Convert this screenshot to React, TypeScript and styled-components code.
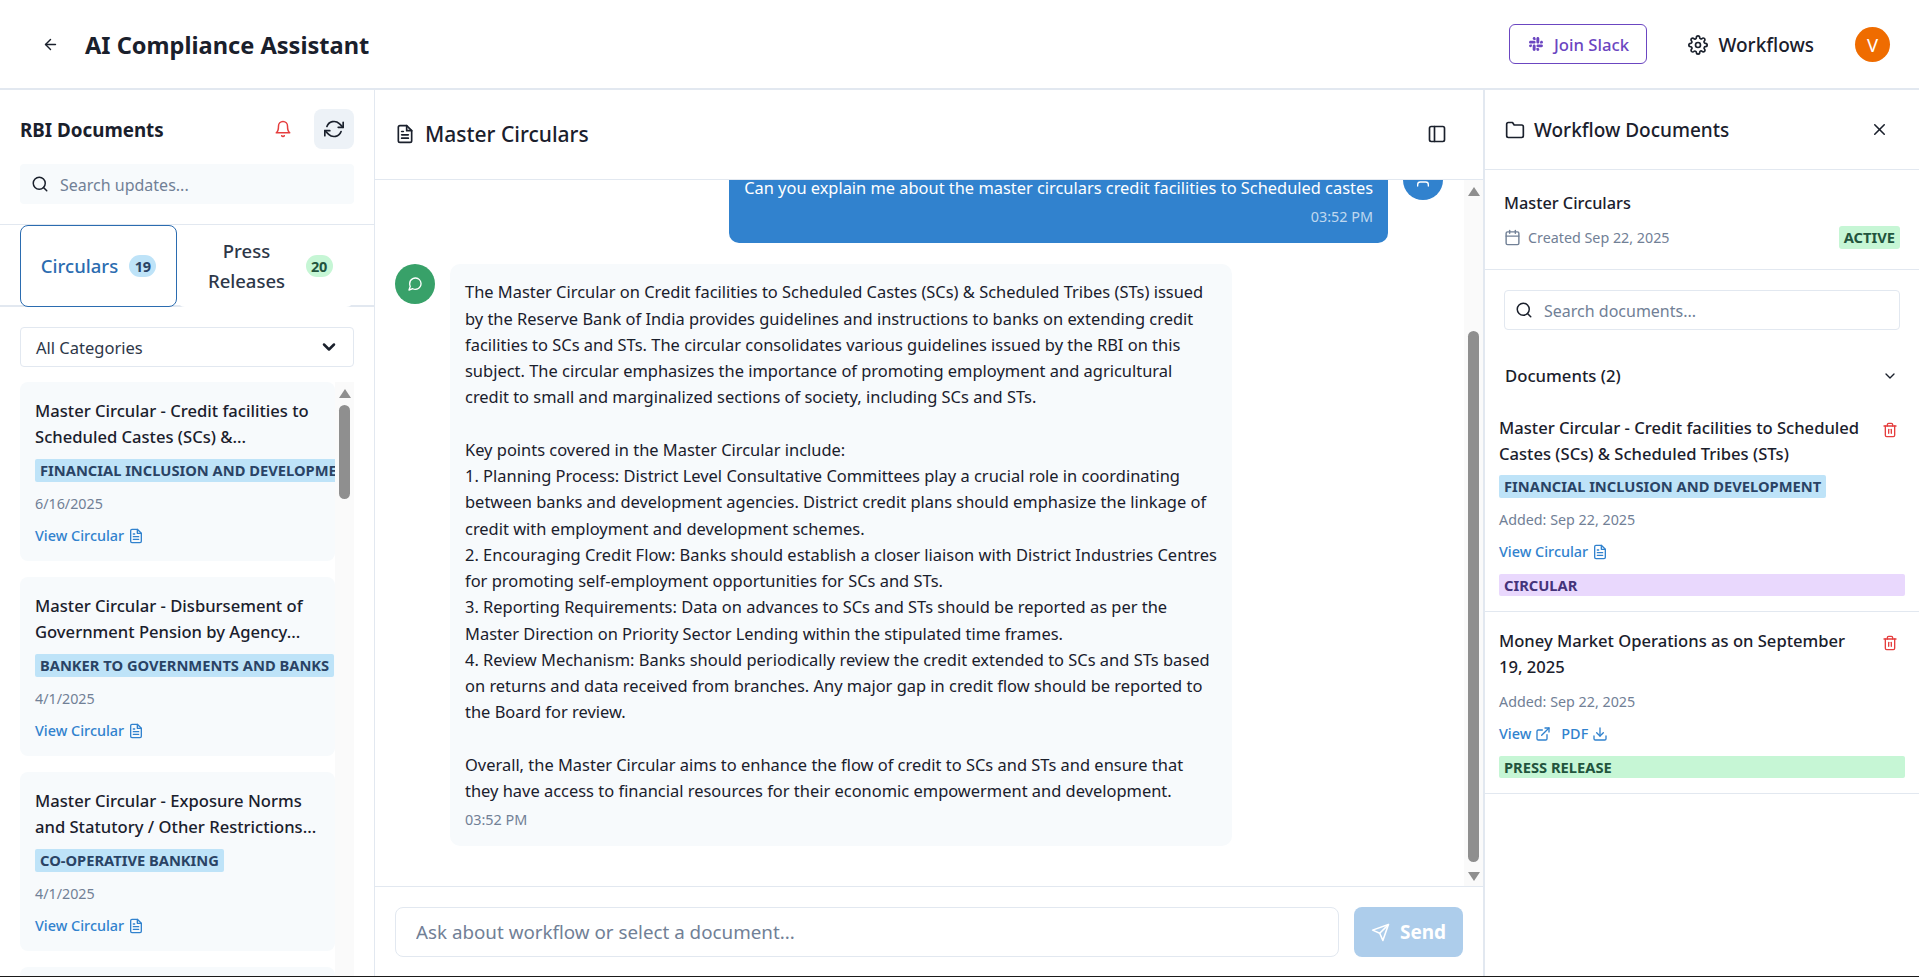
import React, { useLayoutEffect, useRef } from 'react';
import styled, { createGlobalStyle } from 'styled-components';
import {
  FiArrowLeft, FiBell, FiCalendar, FiChevronDown, FiDownload, FiExternalLink, FiFileText, FiFolder,
  FiMessageCircle, FiRefreshCw, FiSearch, FiSend, FiSettings, FiSidebar, FiTrash2, FiUser, FiX,
} from 'react-icons/fi';
import { FaSlack } from 'react-icons/fa';

const GlobalStyle = createGlobalStyle`
  html, body { margin: 0; height: 100%; overflow: hidden; background: #fff; }
  body { font-family: "Noto Sans", "Open Sans", sans-serif; color: #1a202c; }
  * { box-sizing: border-box; }
  input, select { font: inherit; }
`;

const Page = styled.div`
  height: 100vh;
  display: flex;
  flex-direction: column;
  border-bottom: 1px solid #1a1a1a;
`;

const TopBar = styled.header`
  height: 90px;
  flex: none;
  display: flex;
  align-items: center;
  padding: 0 29px 0 42px;
  border-bottom: 2px solid #e2e8f0;
`;

const BackIcon = styled(FiArrowLeft)`
  font-size: 17px;
  margin-right: 26px;
`;

const Title = styled.h1`
  margin: 0;
  padding-top: 2px;
  font-size: 23.6px;
  font-weight: 700;
  flex: 1;
`;

const SlackButton = styled.button`
  height: 40px;
  width: 138px;
  display: flex;
  align-items: center;
  justify-content: center;
  gap: 10px;
  background: #fff;
  border: 1px solid #6b46c1;
  border-radius: 6px;
  color: #6b46c1;
  font: inherit;
  font-size: 16.7px;
  font-weight: 500;
  svg { font-size: 16px; }
`;

const WorkflowsLink = styled.div`
  display: flex;
  align-items: center;
  gap: 10px;
  margin-left: 41px;
  padding-top: 1px;
  font-size: 19px;
  font-weight: 500;
  svg { font-size: 20px; }
`;

const Avatar = styled.div`
  width: 35px;
  height: 35px;
  margin-left: 41px;
  border-radius: 50%;
  background: #ef6c00;
  color: #fff;
  display: flex;
  align-items: center;
  justify-content: center;
  font-size: 18.5px;
`;

const Columns = styled.div`
  flex: 1;
  min-height: 0;
  display: flex;
`;

const LeftPanel = styled.aside`
  width: 375px;
  flex: none;
  border-right: 1px solid #e2e8f0;
  display: flex;
  flex-direction: column;
  overflow: hidden;
`;

const LeftHead = styled.div`
  padding: 19px 20px 20px;
  border-bottom: 1px solid #e2e8f0;
  display: flex;
  flex-direction: column;
  gap: 15px;
`;

const LeftTitleRow = styled.div`
  display: flex;
  align-items: center;
`;

const LeftTitle = styled.h2`
  margin: 0;
  padding-top: 2px;
  flex: 1;
  font-size: 18.8px;
  font-weight: 700;
`;

const BellIcon = styled(FiBell)`
  color: #e53e3e;
  font-size: 18px;
  margin-right: 22px;
`;

const RefreshButton = styled.div`
  width: 40px;
  height: 40px;
  border-radius: 8px;
  background: #edf2f7;
  display: flex;
  align-items: center;
  justify-content: center;
  font-size: 20px;
`;

const SearchBox = styled.label<{ $outlined?: boolean }>`
  height: 40px;
  display: flex;
  align-items: center;
  gap: 11px;
  padding: 0 ${p => (p.$outlined ? '10px' : '11px')};
  border-radius: 4px;
  background: ${p => (p.$outlined ? '#fff' : '#f7fafc')};
  border: ${p => (p.$outlined ? '1px solid #e2e8f0' : 'none')};
  font-size: 16px;
  svg { font-size: 18px; flex: none; }
  input {
    border: 0;
    outline: 0;
    padding: 2px 0 0;
    background: transparent;
    flex: 1;
    min-width: 0;
    color: #1a202c;
    &::placeholder { color: #718096; opacity: 1; }
  }
`;

const Tabs = styled.div`
  display: flex;
  height: 82px;
  flex: none;
  padding: 0 20px;
  border-bottom: 2px solid #e2e8f0;
`;

const Tab = styled.div<{ $active?: boolean }>`
  flex: ${p => (p.$active ? '0 0 157px' : '1')};
  height: 82px;
  display: flex;
  align-items: center;
  justify-content: center;
  gap: 11px;
  font-size: 18.5px;
  line-height: 30px;
  font-weight: 500;
  border-radius: 8px;
  color: ${p => (p.$active ? '#2b6cb0' : '#2d3748')};
  border: ${p => (p.$active ? '1.5px solid #2b6cb0' : '0')};
  background: #fff;
`;

const TabLabel = styled.span<{ $wrapped?: boolean }>`
  text-align: center;
  width: ${p => (p.$wrapped ? '96px' : 'auto')};
`;

const CountBadge = styled.span<{ $tone: 'blue' | 'green' }>`
  min-width: 27px;
  height: 22px;
  padding: 0 5px;
  border-radius: 11px;
  display: flex;
  align-items: center;
  justify-content: center;
  font-size: 14.5px;
  font-weight: 700;
  letter-spacing: -0.4px;
  background: ${p => (p.$tone === 'blue' ? '#bee3f8' : '#c6f6d5')};
  color: ${p => (p.$tone === 'blue' ? '#2a4365' : '#22543d')};
`;

const CategorySelect = styled.div`
  flex: none;
  height: 40px;
  margin: 20px 20px 15px;
  padding: 0 14px 0 15px;
  display: flex;
  align-items: center;
  justify-content: space-between;
  border: 1px solid #e2e8f0;
  border-radius: 4px;
  font-size: 16.5px;
  color: #2d3748;
  svg { font-size: 20px; color: #1a202c; stroke-width: 3; }
`;

// the page photographs without native scrollbars, so the track is drawn over the scroller
const ScrollTrack = styled.div`
  position: absolute;
  top: 0;
  right: 0;
  bottom: 0;
  width: 19px;
  background: #fafafa;
`;

const ScrollArrow = styled.div<{ $down?: boolean }>`
  position: absolute;
  left: 3.5px;
  ${p => (p.$down ? 'bottom: 5px;' : 'top: 7px;')}
  width: 0;
  height: 0;
  border-left: 6px solid transparent;
  border-right: 6px solid transparent;
  ${p => (p.$down ? 'border-top: 9px solid #8f8f8f;' : 'border-bottom: 9px solid #8f8f8f;')}
`;

const ScrollThumb = styled.div`
  position: absolute;
  left: 4px;
  width: 11px;
  border-radius: 6px;
  background: #8f8f8f;
`;

const CardList = styled.div`
  position: relative;
  flex: 1;
  min-height: 0;
  margin: 0 20px;
  padding-right: 19px;
  overflow: hidden;
`;

const CardStack = styled.div`
  display: flex;
  flex-direction: column;
  gap: 16px;
`;

const Card = styled.article`
  height: 179px;
  flex: none;
  padding: 16px 15px;
  border-radius: 8px;
  background: #f7fafc;
  overflow: hidden;
`;

const DocTitle = styled.div`
  font-size: 16.6px;
  line-height: 26px;
  font-weight: 500;
  color: #1a202c;
  white-space: pre-line;
`;

const Tag = styled.span<{ $tone: 'blue' | 'purple' | 'green'; $block?: boolean }>`
  display: ${p => (p.$block ? 'block' : 'inline-block')};
  height: 23px;
  line-height: 23px;
  padding: 0 5px;
  border-radius: 2px;
  white-space: nowrap;
  font-size: 14.7px;
  font-weight: 700;
  background: ${p => ({ blue: '#bee3f8', purple: '#e9d8fd', green: '#c6f6d5' }[p.$tone])};
  color: ${p => ({ blue: '#2a4365', purple: '#44337a', green: '#22543d' }[p.$tone])};
`;

const CardTag = styled(Tag)`
  margin-top: 9px;
`;

const DateText = styled.div`
  margin-top: 11px;
  font-size: 14.3px;
  line-height: 22px;
  color: #718096;
`;

const LinkRow = styled.div`
  margin-top: 10px;
  display: flex;
  align-items: center;
  gap: 10px;
`;

const DocLink = styled.a`
  display: inline-flex;
  align-items: center;
  gap: 4px;
  font-size: 14.4px;
  line-height: 22px;
  font-weight: 500;
  color: #3182ce;
  svg { font-size: 16px; }
`;

const ChatPanel = styled.main`
  flex: 1;
  min-width: 0;
  display: flex;
  flex-direction: column;
  border-right: 1px solid #e2e8f0;
`;

const ChatHead = styled.div`
  height: 90px;
  flex: none;
  display: flex;
  align-items: center;
  padding: 0 36px 2px 20px;
  border-bottom: 1px solid #e2e8f0;
`;

const ChatTitle = styled.h2`
  margin: 0 0 0 10px;
  flex: 1;
  font-size: 21px;
  font-weight: 500;
`;

const ChatViewport = styled.div`
  position: relative;
  flex: 1;
  min-height: 0;
`;

const ChatScroll = styled.div`
  height: 100%;
  overflow: hidden;
`;

const ChatBody = styled.div`
  display: flex;
  flex-direction: column;
  gap: 21px;
  padding: 160px 40px 51px 20px;
`;

const MessageRow = styled.div<{ $mine?: boolean }>`
  display: flex;
  gap: 15px;
  flex-direction: ${p => (p.$mine ? 'row-reverse' : 'row')};
  align-items: flex-start;
`;

const RoundIcon = styled.div<{ $mine?: boolean }>`
  width: 40px;
  height: 40px;
  flex: none;
  border-radius: 50%;
  display: flex;
  align-items: center;
  justify-content: center;
  color: #fff;
  font-size: 16px;
  background: ${p => (p.$mine ? '#3182ce' : '#38a169')};
`;

const Bubble = styled.div<{ $mine?: boolean }>`
  padding: 15px;
  border-radius: 10px;
  white-space: pre;
  font-size: ${p => (p.$mine ? '16.4px' : '16.45px')};
  line-height: 26.25px;
  background: ${p => (p.$mine ? '#3182ce' : '#f7fafc')};
  color: ${p => (p.$mine ? '#fff' : '#1a202c')};
`;

const MessageTime = styled.div<{ $mine?: boolean }>`
  margin-top: 5px;
  font-size: 14.4px;
  line-height: 22px;
  text-align: ${p => (p.$mine ? 'right' : 'left')};
  color: ${p => (p.$mine ? 'rgba(255,255,255,0.7)' : '#718096')};
`;

const Composer = styled.div`
  height: 90px;
  flex: none;
  display: flex;
  gap: 15px;
  padding: 20px;
  border-top: 1px solid #e2e8f0;
`;

const ComposerInput = styled.input`
  flex: 1;
  min-width: 0;
  height: 50px;
  padding: 0 20px;
  border: 1px solid #e2e8f0;
  border-radius: 8px;
  outline: 0;
  font-size: 18.8px;
  &::placeholder { color: #718096; opacity: 1; }
`;

const SendButton = styled.button`
  width: 109px;
  height: 50px;
  border: 0;
  border-radius: 8px;
  background: #adcdeb;
  color: #fff;
  display: flex;
  align-items: center;
  justify-content: center;
  gap: 10px;
  font: inherit;
  font-size: 19px;
  font-weight: 700;
`;

const RightPanel = styled.aside`
  width: 435px;
  flex: none;
  border-left: 1px solid #e2e8f0;
  display: flex;
  flex-direction: column;
`;

const RightHead = styled.div`
  height: 80px;
  display: flex;
  align-items: center;
  padding: 0 30px 0 20px;
  border-bottom: 1px solid #e2e8f0;
  font-size: 19px;
  font-weight: 500;
  svg:first-child { font-size: 20px; margin-right: 9px; }
  span { flex: 1; }
`;

const WorkflowInfo = styled.div`
  height: 100px;
  padding: 20px 19px 0 19px;
  border-bottom: 1px solid #e2e8f0;
`;

const WorkflowName = styled.div`
  font-size: 16.3px;
  line-height: 26px;
  font-weight: 500;
`;

const WorkflowMeta = styled.div`
  margin-top: 10px;
  display: flex;
  align-items: center;
  gap: 7px;
  font-size: 14.3px;
  color: #718096;
  svg { font-size: 17px; }
  span { flex: 1; }
`;

const StatusBadge = styled.div`
  padding: 0 5px;
  height: 23px;
  line-height: 23px;
  font-size: 14.7px;
  border-radius: 3px;
  background: #c6f6d5;
  color: #22543d;
  font-weight: 700;
`;

const RightSearchWrap = styled.div`
  padding: 20px 19px 0 19px;
`;

const SectionHead = styled.div`
  display: flex;
  align-items: center;
  justify-content: space-between;
  padding: 33px 21px 10px 20px;
  font-size: 16.7px;
  line-height: 26px;
  font-weight: 500;
  svg { font-size: 16px; }
`;

const DocEntry = styled.div`
  padding: 16px 14px 15px 14px;
  border-bottom: 1px solid #e2e8f0;
`;

const DocHead = styled.div`
  display: flex;
  justify-content: space-between;
  align-items: flex-start;
  gap: 12px;
  svg { flex: none; margin: 7px 7px 0 0; font-size: 16px; color: #e53e3e; }
`;

const EntryTag = styled(Tag)`
  margin-top: 8px;
`;

const EntryType = styled(Tag)`
  margin-top: 11px;
  height: 22px;
  line-height: 22px;
`;

const DOCS = [
  { title: 'Master Circular - Credit facilities to\nScheduled Castes (SCs) &...', tag: 'FINANCIAL INCLUSION AND DEVELOPMENT', date: '6/16/2025' },
  { title: 'Master Circular - Disbursement of\nGovernment Pension by Agency...', tag: 'BANKER TO GOVERNMENTS AND BANKS', date: '4/1/2025' },
  { title: 'Master Circular - Exposure Norms\nand Statutory / Other Restrictions...', tag: 'CO-OPERATIVE BANKING', date: '4/1/2025' },
];

const ANSWER = `The Master Circular on Credit facilities to Scheduled Castes (SCs) & Scheduled Tribes (STs) issued
by the Reserve Bank of India provides guidelines and instructions to banks on extending credit
facilities to SCs and STs. The circular consolidates various guidelines issued by the RBI on this
subject. The circular emphasizes the importance of promoting employment and agricultural
credit to small and marginalized sections of society, including SCs and STs.

Key points covered in the Master Circular include:
1. Planning Process: District Level Consultative Committees play a crucial role in coordinating
between banks and development agencies. District credit plans should emphasize the linkage of
credit with employment and development schemes.
2. Encouraging Credit Flow: Banks should establish a closer liaison with District Industries Centres
for promoting self-employment opportunities for SCs and STs.
3. Reporting Requirements: Data on advances to SCs and STs should be reported as per the
Master Direction on Priority Sector Lending within the stipulated time frames.
4. Review Mechanism: Banks should periodically review the credit extended to SCs and STs based
on returns and data received from branches. Any major gap in credit flow should be reported to
the Board for review.

Overall, the Master Circular aims to enhance the flow of credit to SCs and STs and ensure that
they have access to financial resources for their economic empowerment and development.`;

const App = () => {
  const chatRef = useRef<HTMLDivElement>(null);

  useLayoutEffect(() => {
    if (chatRef.current) chatRef.current.scrollTop = 180;
  }, []);

  return (
    <Page>
      <GlobalStyle />
      <TopBar>
        <BackIcon />
        <Title>AI Compliance Assistant</Title>
        <SlackButton><FaSlack />Join Slack</SlackButton>
        <WorkflowsLink><FiSettings />Workflows</WorkflowsLink>
        <Avatar>V</Avatar>
      </TopBar>
      <Columns>
        <LeftPanel>
          <LeftHead>
            <LeftTitleRow>
              <LeftTitle>RBI Documents</LeftTitle>
              <BellIcon />
              <RefreshButton><FiRefreshCw /></RefreshButton>
            </LeftTitleRow>
            <SearchBox><FiSearch /><input placeholder="Search updates..." /></SearchBox>
          </LeftHead>
          <Tabs>
            <Tab $active><TabLabel>Circulars</TabLabel><CountBadge $tone="blue">19</CountBadge></Tab>
            <Tab><TabLabel $wrapped>Press Releases</TabLabel><CountBadge $tone="green">20</CountBadge></Tab>
          </Tabs>
          <CategorySelect>All Categories<FiChevronDown /></CategorySelect>
          <CardList>
            <CardStack>
              {DOCS.map(doc => (
                <Card key={doc.title}>
                  <DocTitle>{doc.title}</DocTitle>
                  <CardTag $tone="blue">{doc.tag}</CardTag>
                  <DateText>{doc.date}</DateText>
                  <LinkRow><DocLink>View Circular <FiFileText /></DocLink></LinkRow>
                </Card>
              ))}
              <Card />
            </CardStack>
            <ScrollTrack>
              <ScrollArrow />
              <ScrollThumb style={{ top: 23, height: 94 }} />
            </ScrollTrack>
          </CardList>
        </LeftPanel>

        <ChatPanel>
          <ChatHead>
            <FiFileText size={20} />
            <ChatTitle>Master Circulars</ChatTitle>
            <FiSidebar size={20} />
          </ChatHead>
          <ChatViewport>
            <ChatScroll ref={chatRef}>
              <ChatBody>
                <MessageRow $mine>
                  <RoundIcon $mine><FiUser /></RoundIcon>
                  <Bubble $mine>
                    Can you explain me about the master circulars credit facilities to Scheduled castes
                    <MessageTime $mine>03:52 PM</MessageTime>
                  </Bubble>
                </MessageRow>
                <MessageRow>
                  <RoundIcon><FiMessageCircle /></RoundIcon>
                  <Bubble>
                    {ANSWER}
                    <MessageTime>03:52 PM</MessageTime>
                  </Bubble>
                </MessageRow>
              </ChatBody>
            </ChatScroll>
            <ScrollTrack>
              <ScrollArrow />
              <ScrollThumb style={{ top: 151, height: 531 }} />
              <ScrollArrow $down />
            </ScrollTrack>
          </ChatViewport>
          <Composer>
            <ComposerInput placeholder="Ask about workflow or select a document..." />
            <SendButton><FiSend />Send</SendButton>
          </Composer>
        </ChatPanel>

        <RightPanel>
          <RightHead><FiFolder /><span>Workflow Documents</span><FiX /></RightHead>
          <WorkflowInfo>
            <WorkflowName>Master Circulars</WorkflowName>
            <WorkflowMeta>
              <FiCalendar />
              <span>Created Sep 22, 2025</span>
              <StatusBadge>ACTIVE</StatusBadge>
            </WorkflowMeta>
          </WorkflowInfo>
          <RightSearchWrap>
            <SearchBox $outlined><FiSearch /><input placeholder="Search documents..." /></SearchBox>
          </RightSearchWrap>
          <SectionHead>Documents (2)<FiChevronDown /></SectionHead>
          <DocEntry>
            <DocHead>
              <DocTitle>Master Circular - Credit facilities to Scheduled Castes (SCs) & Scheduled Tribes (STs)</DocTitle>
              <FiTrash2 />
            </DocHead>
            <EntryTag $tone="blue">FINANCIAL INCLUSION AND DEVELOPMENT</EntryTag>
            <DateText>Added: Sep 22, 2025</DateText>
            <LinkRow><DocLink>View Circular <FiFileText /></DocLink></LinkRow>
            <EntryType $tone="purple" $block>CIRCULAR</EntryType>
          </DocEntry>
          <DocEntry>
            <DocHead>
              <DocTitle>{'Money Market Operations as on September\n19, 2025'}</DocTitle>
              <FiTrash2 />
            </DocHead>
            <DateText>Added: Sep 22, 2025</DateText>
            <LinkRow>
              <DocLink>View <FiExternalLink /></DocLink>
              <DocLink>PDF <FiDownload /></DocLink>
            </LinkRow>
            <EntryType $tone="green" $block>PRESS RELEASE</EntryType>
          </DocEntry>
        </RightPanel>
      </Columns>
    </Page>
  );
};

export default App;
